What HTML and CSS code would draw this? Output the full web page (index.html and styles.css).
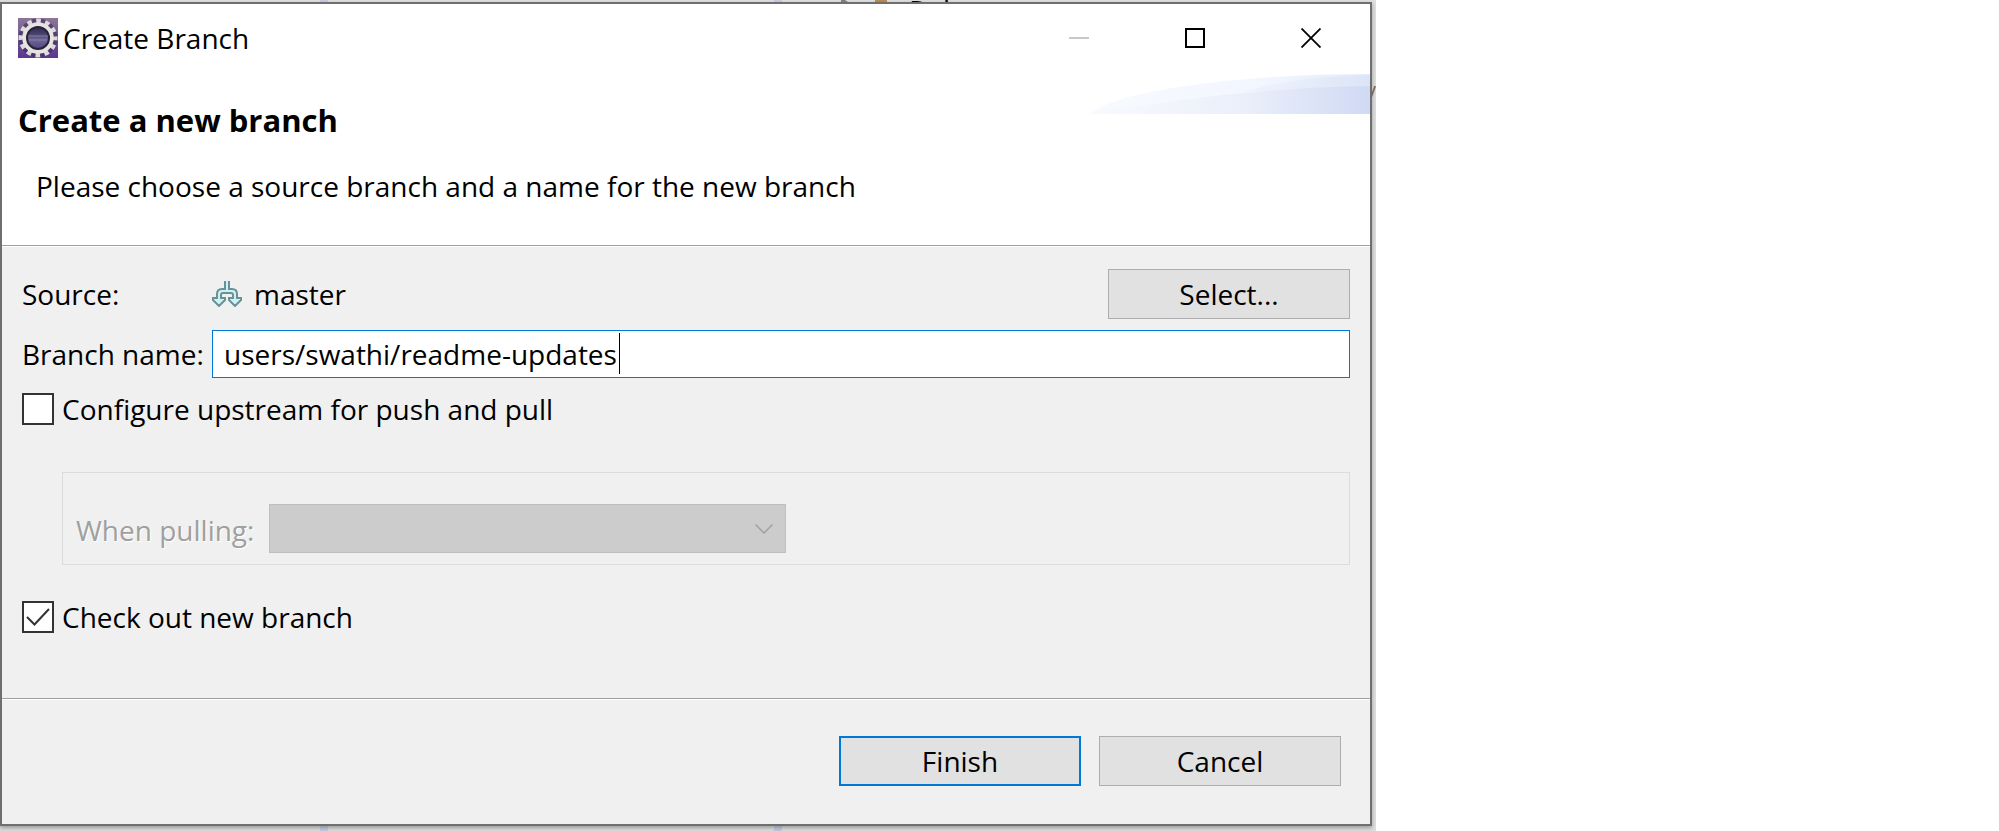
FILE: index.html
```html
<!DOCTYPE html>
<html lang="en">
<head>
<meta charset="utf-8">
<title>Create Branch</title>
<link rel="stylesheet" href="styles.css">
</head>
<body>
<div class="screen">
  <div class="desktop">
    <div class="sash sash-left"></div>
    <div class="sash sash-right"></div>
    <div class="tree-item">
      <svg width="58" height="8" viewBox="0 0 58 8" fill="none" aria-hidden="true"><path d="M0 4V0H4L10 4Z" fill="#808080"/><path d="M35 8V1H45V8M45 4H54" stroke="#c08a50" stroke-width="2"/></svg>
      <span>Pul</span>
    </div>
    <span class="edge-text">v</span>

    <main class="dialog">
      <header class="titlebar">
        <svg class="app-icon" viewBox="0 0 40 40" aria-hidden="true">
          <defs>
            <linearGradient id="tile" x1="0" y1="0" x2="0" y2="1"><stop offset="0" stop-color="#8f7599"/><stop offset=".5" stop-color="#6c5690"/><stop offset="1" stop-color="#5c3591"/></linearGradient>
            <linearGradient id="lens" x1="0" y1="0" x2="0" y2="1"><stop offset="0" stop-color="#28203f"/><stop offset=".4" stop-color="#4d4873"/><stop offset=".55" stop-color="#6d6596"/><stop offset="1" stop-color="#4b3f79"/></linearGradient>
          </defs>
          <rect width="40" height="40" fill="url(#tile)"/>
          <circle cx="20" cy="20" r="16" fill="none" stroke="#3e2c58" stroke-opacity=".6" stroke-width="7"/>
          <circle cx="20" cy="20" r="17" fill="none" stroke="#dddadd" stroke-width="5" stroke-dasharray="4.6 4.3" stroke-dashoffset="2.3"/>
          <circle cx="20" cy="20" r="13.500" fill="url(#lens)" stroke="#e6e4e2" stroke-width="4.500"/>
          <circle cx="20" cy="20" r="11" fill="none" stroke="#292238" stroke-width="2"/>
          <path d="M10 18H30M11 22H29" stroke="#8680a5" stroke-width="1"/>
        </svg>
        <span class="title">Create Branch</span>
        <div class="window-controls">
          <button type="button" aria-label="Minimize" disabled><svg width="20" height="20" viewBox="0 0 20 20"><path d="M0 10H20" stroke="#c8c8c8" stroke-width="2"/></svg></button>
          <button type="button" aria-label="Maximize"><svg width="20" height="20" viewBox="0 0 20 20"><path d="M1 1H19V19H1Z" fill="none" stroke="#000" stroke-width="2"/></svg></button>
          <button type="button" aria-label="Close"><svg width="20" height="20" viewBox="0 0 20 20"><path d="M.5 .5L19.5 19.5M19.5 .5L.5 19.5" stroke="#000" stroke-width="1.8"/></svg></button>
        </div>
      </header>

      <section class="banner">
        <svg class="swoosh" width="280" height="40" viewBox="0 0 280 40" aria-hidden="true">
          <defs>
            <linearGradient id="outer"><stop offset="0" stop-color="#f8faff"/><stop offset=".6" stop-color="#f2f6fe"/><stop offset="1" stop-color="#e4ebf9"/></linearGradient>
            <linearGradient id="upper"><stop offset="0" stop-color="#eff4fd"/><stop offset="1" stop-color="#dce5f7"/></linearGradient>
            <linearGradient id="inner"><stop offset="0" stop-color="#f8faff"/><stop offset=".55" stop-color="#ebeffa"/><stop offset="1" stop-color="#d0daf4"/></linearGradient>
          </defs>
          <path d="M0 40C28 14 165 0 280 0V40Z" fill="url(#outer)"/>
          <path d="M150 18C190 8 230 2 280 1V14Z" fill="url(#upper)"/>
          <path d="M0 40C70 28 175 13 280 12V40Z" fill="url(#inner)"/>
        </svg>
        <h1>Create a new branch</h1>
        <p>Please choose a source branch and a name for the new branch</p>
      </section>

      <form class="form">
        <div class="fields">
          <span>Source:</span>
          <span class="source">
            <svg width="30" height="26" viewBox="0 0 30 26" fill="#cdf2f5" stroke="#689396" stroke-width="2" aria-hidden="true">
              <path d="M13 0V8H10Q5 8 5 13V17H1V19L7 25L13 19V17H9V14Q9 12 11 12H19Q21 12 21 14V17H17V19L23 25L29 19V17H25V13Q25 8 20 8H17V0"/>
            </svg>
            master
          </span>
          <button type="button" class="button">Select...</button>
          <label for="branch">Branch name:</label>
          <div class="branch-field">
            <input id="branch" type="text" value="users/swathi/readme-updates">
            <span class="caret"></span>
          </div>
        </div>
        <label class="check"><input type="checkbox">Configure upstream for push and pull</label>
        <div class="group">
          <label for="pulling">When pulling:</label>
          <div class="combo">
            <select id="pulling" disabled><option></option></select>
            <svg width="18" height="10" viewBox="0 0 18 10" fill="none" stroke="#a0a0a0" stroke-width="1.5" aria-hidden="true"><path d="M.5 .5L9 9L17.5 .5"/></svg>
          </div>
        </div>
        <label class="check"><input type="checkbox" checked>Check out new branch</label>
      </form>

      <footer class="actions">
        <button type="button" class="button default">Finish</button>
        <button type="button" class="button">Cancel</button>
      </footer>
    </main>
  </div>
</div>
</body>
</html>
```
FILE: styles.css
```css
* { box-sizing: border-box; }

body {
  margin: 0;
  background: #fff;
  color: #000;
  font: 28px/40px "Open Sans", "Noto Sans", sans-serif;
}

button, input, select { font: inherit; color: inherit; }

.screen {
  display: grid;
  grid-template-columns: 1376fr 623fr;
  min-height: 100vh;
}

.desktop {
  position: relative;
  display: flex;
  padding: 2px 4px 5px 0;
  background: #dedede;
  overflow: hidden;
}

.sash {
  position: absolute;
  top: 0;
  bottom: 0;
  width: 8px;
  background: #c8cbe0;
}
.sash-left { left: 320px; }
.sash-right { left: 774px; }

.tree-item {
  position: absolute;
  top: 0;
  left: 841px;
  display: flex;
  gap: 10px;
  line-height: 20px;
}

.edge-text {
  position: absolute;
  top: 70px;
  right: 0;
  font-size: 20px;
  color: #806850;
}

.dialog {
  position: relative;
  flex: 1;
  display: flex;
  flex-direction: column;
  border: 2px solid #6e6f71;
  background: #f0f0f0;
  box-shadow: 0 2px 4px rgb(0 0 0 / 30%);
}

.titlebar {
  display: flex;
  align-items: center;
  gap: 5px;
  height: 70px;
  padding: 0 1px 2px 16px;
  background: #fff;
}
.app-icon { width: 40px; height: 40px; }

.window-controls {
  display: flex;
  margin-left: auto;
}
.window-controls button {
  display: grid;
  place-items: center;
  width: 116px;
  height: 60px;
  padding: 0;
  border: 0;
  background: none;
}

.banner {
  position: relative;
  padding: 26px 16px 39px;
  background: #fff;
  border-bottom: 1px solid #a0a0a0;
}
.swoosh {
  position: absolute;
  top: 0;
  right: 0;
}
h1 {
  margin: 0;
  font-size: 31px;
  line-height: 40px;
}
.banner p { margin: 26px 0 0 18px; }

.form {
  flex: 1;
  padding: 22px 20px 0;
  border-top: 1px solid #fff;
}

.fields {
  display: grid;
  grid-template-columns: 182px 1fr auto;
  align-items: center;
  gap: 11px 8px;
  white-space: nowrap;
}
.source {
  display: flex;
  align-items: center;
  gap: 12px;
}

.button {
  width: 242px;
  height: 50px;
  padding: 0;
  border: 1px solid #adadad;
  border-radius: 0;
  background: #e1e1e1;
}
.button.default { border: 2px solid #0078d7; }

.branch-field {
  position: relative;
  grid-column: 2 / 4;
}
.branch-field input {
  display: block;
  width: 100%;
  height: 48px;
  padding: 0 11px;
  border: 1px solid #0078d7;
  border-radius: 0;
  background: #fff;
  outline: 0;
}
.caret {
  position: absolute;
  top: 3px;
  left: 407px;
  width: 1px;
  height: 41px;
  background: #000;
}

.check {
  display: flex;
  align-items: center;
  gap: 8px;
  margin-top: 11px;
}
.check input {
  appearance: none;
  flex: none;
  width: 32px;
  height: 32px;
  margin: 0;
  border: 2px solid #333;
  background: #fff;
}
.check input:checked {
  background: #fff url("data:image/svg+xml,%3Csvg xmlns='http://www.w3.org/2000/svg' viewBox='0 0 28 28'%3E%3Cpath d='M3 14L10.500 21.500L25 6' fill='none' stroke='%23333' stroke-width='2'/%3E%3C/svg%3E");
}

.group {
  display: flex;
  align-items: flex-start;
  gap: 15px;
  height: 93px;
  margin: 43px 0 32px 40px;
  padding: 31px 13px 0;
  border: 1px solid #dcdcdc;
  color: #a0a0a0;
  line-height: 52px;
  text-shadow: 1px 1px #fff;
}
.combo {
  position: relative;
  width: 41%;
}
.combo select {
  appearance: none;
  display: block;
  width: 100%;
  height: 49px;
  border: 1px solid #bfbfbf;
  border-radius: 0;
  background: #ccc;
  opacity: 1;
}
.combo svg {
  position: absolute;
  top: 20px;
  right: 13px;
}

.actions {
  display: flex;
  justify-content: flex-end;
  gap: 18px;
  padding: 37px 29px 38px;
  border-top: 1px solid #a0a0a0;
  box-shadow: inset 0 1px #fff;
}
```
